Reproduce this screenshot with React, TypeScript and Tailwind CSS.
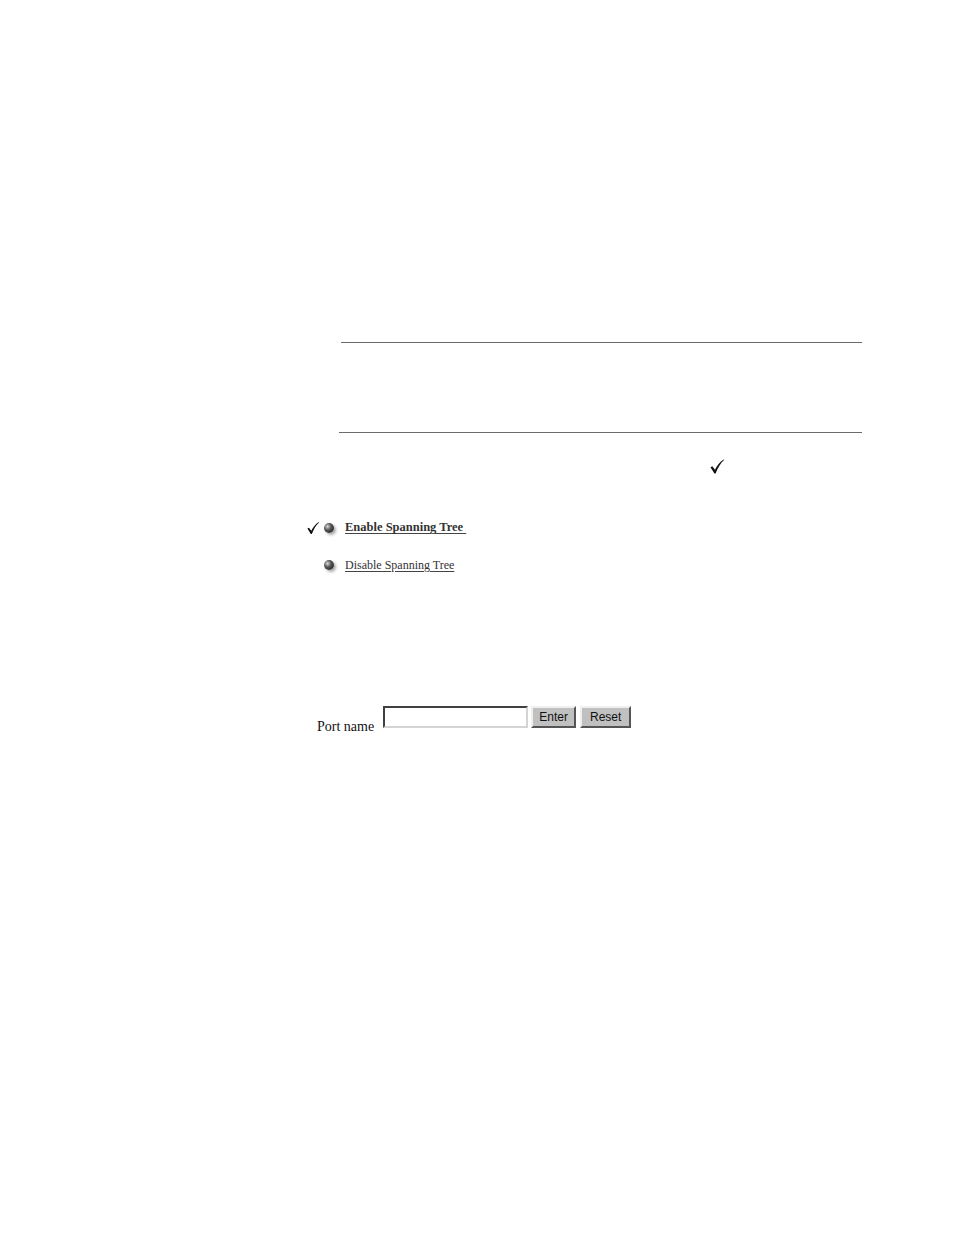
import React from "react";

// Small hand-drawn check mark used as a "selected" indicator
function CheckMark({ className }: { className?: string }) {
  return (
    <svg viewBox="0 0 14 15" className={className} fill="#111">
      <path d="M0.5 8.2 L2.3 7.2 L5 10.8 C7 6.5 9.8 3 13.6 0.4 L14 1 C10.6 4.2 8 8.4 5.6 14.6 L4.4 14.6 Z" />
    </svg>
  );
}

function Sphere() {
  return (
    <span className="inline-block w-[10px] h-[10px] rounded-full bg-[radial-gradient(circle_at_35%_35%,#d8d8d8_0%,#555_40%,#111_100%)] shadow-[2px_2px_3px_rgba(0,0,0,0.35)]" />
  );
}

export default function App() {
  return (
    <div className="w-[954px] h-[1235px] bg-white pt-[342px] font-['Liberation_Serif',serif] text-[#222]">
      {/* Rule pair */}
      <div className="ml-[341px] w-[521px] h-px bg-[#6a6a6a]" />
      <div className="mt-[89px] ml-[339px] w-[523px] h-px bg-[#6a6a6a]" />

      {/* Check mark in text column */}
      <div className="mt-[26px] ml-[710px] h-[15px]">
        <CheckMark className="w-[14px] h-[15px]" />
      </div>

      {/* Spanning tree options */}
      <div className="mt-[46px] ml-[307px] flex flex-col gap-[22px]">
        <div className="flex items-center h-[15px]">
          <CheckMark className="w-[12px] h-[14px]" />
          <span className="ml-[5px] flex items-center">
            <Sphere />
          </span>
          <span className="ml-[11px] text-[12.5px] font-bold text-[#333] underline underline-offset-[2px] decoration-[#444] leading-none">
            Enable Spanning Tree&nbsp;
          </span>
        </div>
        <div className="flex items-center h-[15px] pl-[17px]">
          <Sphere />
          <span className="ml-[11px] text-[12px] text-[#333] underline underline-offset-[2px] decoration-[#444] leading-none">
            Disable Spanning Tree
          </span>
        </div>
      </div>

      {/* Port name form */}
      <div className="mt-[134px] ml-[317px] flex items-end">
        <span className="text-[14px] leading-none text-[#111] mb-[-6px]">Port name</span>
        <input
          type="text"
          className="ml-[9px] w-[145px] h-[22px] bg-white border-2 border-t-[#404040] border-l-[#404040] border-b-[#d4d4d4] border-r-[#d4d4d4] outline-none"
        />
        <button className="ml-[3px] w-[45px] h-[22px] bg-[#c0c0c0] border-2 border-t-[#efefef] border-l-[#efefef] border-b-[#555] border-r-[#555] text-[12px] font-['Liberation_Sans',sans-serif] text-[#111] leading-none">
          Enter
        </button>
        <button className="ml-[4px] w-[51px] h-[22px] bg-[#c0c0c0] border-2 border-t-[#efefef] border-l-[#efefef] border-b-[#555] border-r-[#555] text-[12px] font-['Liberation_Sans',sans-serif] text-[#111] leading-none">
          Reset
        </button>
      </div>
    </div>
  );
}
